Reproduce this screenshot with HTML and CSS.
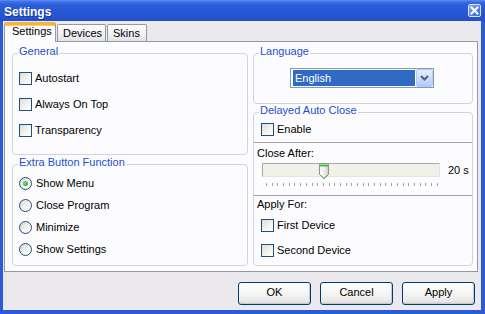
FILE: index.html
```html
<!DOCTYPE html>
<html>
<head>
<meta charset="utf-8">
<title>Settings</title>
<link rel="stylesheet" href="styles.css">
</head>
<body>
<div class="window">
  <div class="titlebar">
    <span class="title">Settings</span>
    <span class="close">
      <svg width="11" height="11" viewBox="0 0 11 11"><path d="M2.5 2.5 L8.5 8.5 M8.5 2.5 L2.5 8.5" stroke="#fff" stroke-width="2" stroke-linecap="square"/></svg>
    </span>
  </div>
  <div class="frame">
    <div class="client">
      <div class="tabs">
        <div class="tab active">Settings</div>
        <div class="tab">Devices</div>
        <div class="tab skins">Skins</div>
      </div>
      <div class="panel">
        <div class="col">
          <div class="group general">
            <div class="legend">General</div>
            <div class="list checks">
              <div class="row"><span class="cb"></span><span>Autostart</span></div>
              <div class="row"><span class="cb"></span><span>Always On Top</span></div>
              <div class="row"><span class="cb"></span><span>Transparency</span></div>
            </div>
          </div>
          <div class="group extra">
            <div class="legend">Extra Button Function</div>
            <div class="list radios">
              <div class="row"><span class="rb on"></span><span>Show Menu</span></div>
              <div class="row"><span class="rb"></span><span>Close Program</span></div>
              <div class="row"><span class="rb"></span><span>Minimize</span></div>
              <div class="row"><span class="rb"></span><span>Show Settings</span></div>
            </div>
          </div>
        </div>
        <div class="col">
          <div class="group lang">
            <div class="legend">Language</div>
            <div class="combo">
              <span class="sel">English</span>
              <span class="drop"><svg width="15" height="16" viewBox="0 0 15 16"><path d="M4 6 L7.5 9.5 L11 6" fill="none" stroke="#4d6185" stroke-width="2"/></svg></span>
            </div>
          </div>
          <div class="group delayed">
            <div class="legend">Delayed Auto Close</div>
            <div class="row enable"><span class="cb"></span><span>Enable</span></div>
            <div class="sep"></div>
            <div class="lbl close-lbl">Close After:</div>
            <div class="slider-row">
              <div class="slider">
                <div class="track">
                  <svg class="thumb" width="11" height="17" viewBox="0 0 11 17">
                    <defs>
                      <linearGradient id="tg" x1="0" y1="0" x2="1" y2="0">
                        <stop offset="0" stop-color="#ffffff"/>
                        <stop offset="0.6" stop-color="#ecebe8"/>
                        <stop offset="1" stop-color="#c9c8c4"/>
                      </linearGradient>
                    </defs>
                    <path d="M0.5 1.5 Q0.5 0.5 1.5 0.5 H8.5 Q9.5 0.5 9.5 1.5 V11.5 L5 16 L0.5 11.5 Z" fill="url(#tg)" stroke="#8e8f8f"/>
                    <rect x="1" y="1" width="8" height="2.5" fill="#3fbf3f"/>
                    <rect x="1" y="1" width="8" height="1" fill="#8ee88e"/>
                    <path d="M1.5 11.8 L5 15.3 L8.5 11.8" fill="none" stroke="#5ac85a" stroke-width="1"/>
                  </svg>
                </div>
                <div class="ticks">
                  <i></i><i></i><i></i><i></i><i></i><i></i><i></i><i></i><i></i><i></i>
                  <i></i><i></i><i></i><i></i><i></i><i></i><i></i><i></i><i></i><i></i>
                  <i></i><i></i><i></i><i></i><i></i><i></i><i></i><i></i><i></i><i></i>
                  <i></i>
                </div>
              </div>
              <span class="val">20 s</span>
            </div>
            <div class="sep sep2"></div>
            <div class="lbl apply-lbl">Apply For:</div>
            <div class="row first"><span class="cb"></span><span>First Device</span></div>
            <div class="row second"><span class="cb"></span><span>Second Device</span></div>
          </div>
        </div>
      </div>
      <div class="buttons">
        <button class="btn">OK</button>
        <button class="btn">Cancel</button>
        <button class="btn">Apply</button>
      </div>
    </div>
  </div>
</div>
</body>
</html>
```
FILE: styles.css
```css
* { box-sizing: border-box; }
html, body { margin: 0; padding: 0; }
body {
  font-family: "Liberation Sans", Arial, sans-serif;
  font-size: 11px;
  color: #000;
  background: #ebe9ed;
}
.window {
  width: 485px;
  height: 314px;
  display: flex;
  flex-direction: column;
  background: #2a5ad4;
}
.titlebar {
  height: 21px;
  display: flex;
  align-items: center;
  justify-content: space-between;
  padding: 3px 4px 0 4px;
  background: linear-gradient(#5c8ff0 0, #3b6fe4 2px, #2b5ddb 5px, #2856d4 60%, #234fcb 100%);
}
.title {
  color: #fff;
  font-weight: bold;
  font-size: 12px;
  line-height: 13px;
  text-shadow: 1px 1px 0 #123a9a;
}
.close {
  width: 13px;
  height: 13px;
  margin-top: -3px;
  border: 1px solid #dbe5fb;
  border-radius: 2px;
  background: linear-gradient(135deg, #86a8f2, #4f7be2 60%, #3d69d6);
  display: flex;
  align-items: center;
  justify-content: center;
}
.close svg { display: block; }
.frame {
  flex: 1;
  display: flex;
  border-left: 3px solid #2c5bd5;
  border-right: 4px solid #2c5bd5;
  border-bottom: 4px solid #2c5bd5;
}
.client {
  flex: 1;
  background: #ebe9ed;
  display: flex;
  flex-direction: column;
}
.tabs {
  height: 20px;
  padding: 1px 0 0 1px;
  display: flex;
  align-items: flex-end;
}
.tab {
  height: 17px;
  margin-left: 1px;
  padding: 0 0 0 5px;
  line-height: 16px;
  border: 1px solid #919b9c;
  border-bottom: none;
  border-radius: 2px 2px 0 0;
  background: linear-gradient(#ffffff, #f3f3f6 50%, #e2e2ea);
  width: 49px;
}
.tab.skins { width: 40px; }
.tab.active {
  margin-left: 0;
  width: 52px;
  height: 20px;
  margin-bottom: -1px;
  position: relative;
  z-index: 1;
  padding: 0 0 4px 7px;
  line-height: 13px;
  border-top: 3px solid #f5b43b;
  background: #fcfcfe;
  box-shadow: inset 0 1px 0 #ffcd5a;
}
.panel {
  height: 231px;
  margin: 0 3px 0 1px;
  border: 1px solid #919b9c;
  background: #fcfcfe;
  padding: 11px 4px 5px 7px;
  display: grid;
  grid-template-columns: 236px 220px;
  column-gap: 5px;
  align-items: start;
}
.col {
  display: flex;
  flex-direction: column;
}
.group {
  border: 1px solid #d3d3d8;
  border-radius: 4px;
}
.general { height: 102px; padding-left: 6px; }
.extra { height: 102px; margin-top: 9px; padding-left: 6px; }
.lang { height: 51px; }
.delayed { height: 154px; margin-top: 8px; }
.legend {
  width: fit-content;
  margin: -9px 0 0 5px;
  padding: 0 1px;
  line-height: 13px;
  color: #1f4fcf;
  background: #fcfcfe;
}
.general .legend, .extra .legend { margin-left: -1px; }
.list {
  display: flex;
  flex-direction: column;
}
.checks { margin-top: 14px; gap: 13px; }
.radios { margin-top: 8px; gap: 9px; }
.row {
  display: flex;
  align-items: center;
  height: 13px;
  line-height: 13px;
  white-space: nowrap;
}
.cb {
  width: 13px;
  height: 13px;
  margin-right: 3px;
  border: 1px solid #1c5180;
  background: linear-gradient(135deg, #dcdcd7 0%, #f1f1ee 50%, #ffffff 100%);
  flex: none;
}
.rb {
  width: 13px;
  height: 13px;
  margin-right: 4px;
  border: 1px solid #1c5180;
  border-radius: 50%;
  background: linear-gradient(135deg, #d8d8d3 0%, #f2f2ef 55%, #ffffff 100%);
  flex: none;
  display: flex;
  align-items: center;
  justify-content: center;
}
.rb.on::after {
  content: "";
  width: 5px;
  height: 5px;
  border-radius: 50%;
  background: radial-gradient(circle at 40% 40%, #7fe27f 0, #3dbb3d 55%, #1f9a1f 100%);
}
.combo {
  width: 144px;
  height: 20px;
  margin: 10px 0 0 36px;
  border: 1px solid #7f9db9;
  background: #fff;
  display: flex;
}
.sel {
  width: 122px;
  height: 16px;
  margin: 1px 1px 1px 2px;
  padding-left: 2px;
  line-height: 16px;
  background: #316ac5;
  color: #fff;
}
.drop {
  width: 17px;
  height: 18px;
  border: 1px solid #b7cbf5;
  border-radius: 2px;
  background: linear-gradient(#e6eefd, #c9d9fb 60%, #b3c8f6);
  display: flex;
  align-items: center;
  justify-content: center;
}
.drop svg { display: block; }
.enable { margin: 6px 0 0 7px; }
.sep {
  height: 1px;
  margin-top: 6px;
  background: #a3a3a7;
}
.lbl {
  line-height: 13px;
  padding-left: 3px;
}
.close-lbl { margin-top: 4px; }
.slider-row {
  display: flex;
  align-items: flex-start;
  margin-top: 3px;
}
.slider {
  width: 178px;
  margin-left: 8px;
}
.track {
  position: relative;
  height: 14px;
  border: 1px solid;
  border-color: #a9a9ab #e4e4e4 #e4e4e4 #a9a9ab;
  background: #f1f0e9;
}
.thumb {
  position: absolute;
  left: 56px;
  top: -1px;
  display: block;
}
.ticks {
  display: flex;
  justify-content: space-between;
  width: 172px;
  margin: 6px 0 0 4px;
  height: 3px;
}
.ticks i {
  width: 1px;
  height: 3px;
  background: #a2a2a2;
}
.val {
  margin: 1px 0 0 8px;
  line-height: 13px;
}
.sep2 { margin-top: 9px; }
.apply-lbl { margin-top: 2px; }
.first { margin: 8px 0 0 7px; }
.second { margin: 12px 0 0 7px; }
.buttons {
  display: flex;
  justify-content: flex-end;
  gap: 9px;
  padding: 10px 6px 0 0;
}
.btn {
  width: 73px;
  height: 23px;
  margin: 0;
  padding: 0 0 2px;
  border: 1px solid #003c74;
  border-radius: 3px;
  font-family: "Liberation Sans", Arial, sans-serif;
  font-size: 11px;
  line-height: 19px;
  color: #000;
  background: linear-gradient(#ffffff 0%, #f6f6f4 45%, #e9e9e8 85%, #d4d4dc 100%);
  box-shadow: inset -1px -1px 0 #c9c9d2;
}
```
